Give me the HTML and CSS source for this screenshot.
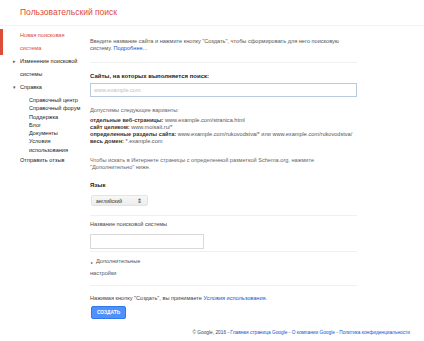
FILE: index.html
```html
<!DOCTYPE html>
<html lang="ru">
<head>
  <meta charset="UTF-8">
  <title>Пользовательский поиск</title>
  <link rel="stylesheet" href="styles.css">
</head>
<body>
  <header class="top">
    <h1>Пользовательский поиск</h1>
  </header>

  <div class="layout">
    <nav class="side">
      <div class="item active">Новая поисковая система</div>
      <div class="item"><span class="arrow">&#9656;</span>Изменение поисковой системы</div>
      <div class="item"><span class="arrow">&#9662;</span>Справка</div>
      <ul class="sub">
        <li>Справочный центр</li>
        <li>Справочный форум</li>
        <li>Поддержка</li>
        <li>Блог</li>
        <li>Документы</li>
        <li>Условия использования</li>
      </ul>
      <div class="item">Отправить отзыв</div>
    </nav>

    <main class="content">
      <p class="intro">Введите название сайта и нажмите кнопку "Создать", чтобы сформировать для него поисковую систему. <a href="#">Подробнее...</a></p>
      <hr>

      <label class="label">Сайты, на которых выполняется поиск:</label>
      <input class="field wide" type="text" placeholder="www.example.com">

      <p class="hint">Допустимы следующие варианты:</p>
      <ul class="variants">
        <li><b>отдельные веб-страницы:</b> www.example.com/stranica.html</li>
        <li><b>сайт целиком:</b> www.moisait.ru/*</li>
        <li><b>определенные разделы сайта:</b> www.example.com/rukovodstva/* или www.example.com/rukovodstva/</li>
        <li><b>весь домен:</b> *.example.com</li>
      </ul>
      <p class="hint schema">Чтобы искать в Интернете страницы с определенной разметкой Schema.org, нажмите "Дополнительно" ниже.</p>

      <label class="label lang">Язык</label>
      <div class="select">английский <span class="updown">&#8661;</span></div>
      <hr class="sep-lang">

      <label class="label name">Название поисковой системы</label>
      <input class="field short" type="text">
      <hr class="sep-name">

      <div class="advanced"><span class="arrow">&#9656;</span>Дополнительные настройки</div>
      <hr class="sep-adv">

      <p class="terms">Нажимая кнопку "Создать", вы принимаете <a href="#">Условия использования</a>.</p>
      <button class="create">СОЗДАТЬ</button>
    </main>
  </div>

  <footer class="foot">
    &copy; Google, 2016 - <a href="#">Главная страница Google</a> - <a href="#">О компании Google</a> - <a href="#">Политика конфиденциальности</a>
  </footer>
</body>
</html>
```

FILE: styles.css
```css
body {
  margin: 0;
  font-family: "Liberation Sans", Arial, sans-serif;
  font-size: 5.6px;
  color: #444;
  background: #fff;
}
a {
  color: #1155cc;
  text-decoration: none;
}

.top {
  height: 25px;
  border-bottom: 1px solid #f2f2f2;
}
.top h1 {
  margin: 0;
  padding-left: 20px;
  line-height: 25px;
  font-size: 8.5px;
  font-weight: normal;
  color: #dd4b39;
}

.layout {
  display: flex;
}

/* левая колонка */
.side {
  width: 90px;
  flex-shrink: 0;
  padding-top: 3px;
  color: #222;
}
.item {
  position: relative;
  padding: 0 8px 0 20px;
  line-height: 13px;
}
.item.active {
  color: #dd4b39;
  border-left: 3px solid #dd4b39;
  padding-left: 17px;
}
.item .arrow {
  position: absolute;
  left: 13px;
  font-size: 5px;
  color: #555;
}
.sub {
  list-style: none;
  margin: 2px 0 0;
  padding: 0 4px 0 29px;
  line-height: 8.3px;
}

/* основная часть */
.content {
  width: 267px;
  padding: 12px 0 0;
}
.content p {
  margin: 0;
}
.intro {
  line-height: 7px;
  color: #555;
}
hr {
  border: 0;
  border-top: 1px solid #f0f0f0;
  margin: 10px 0 0;
}
.label {
  display: block;
  margin-top: 10px;
  line-height: 7px;
  font-size: 6px;
  font-weight: bold;
  color: #222;
}
.field {
  display: block;
  box-sizing: border-box;
  margin: 3px 0 0;
  height: 14px;
  padding: 0 3px;
  border: 1px solid #b9c9e0;
  font: inherit;
}
.field::placeholder {
  color: #c0c0c0;
}
.field.wide {
  width: 267px;
}
.field.short {
  width: 114px;
  height: 15px;
  margin-top: 6px;
  border-color: #d9d9d9;
}
.hint {
  margin-top: 10px !important;
  line-height: 7px;
  color: #666;
}
.variants {
  list-style: none;
  margin: 3px 0 0;
  padding: 0;
  line-height: 7px;
  color: #555;
}
.variants b {
  color: #333;
}
.hint.schema {
  margin-top: 12px !important;
}
.label.lang {
  margin-top: 11px;
}
.select {
  display: flex;
  justify-content: space-between;
  align-items: center;
  box-sizing: border-box;
  width: 57px;
  height: 11px;
  margin: 6px 0 0 1px;
  padding: 0 5px 0 4px;
  background: linear-gradient(#f8f8f8, #ececec);
  border: 1px solid #e4e4e4;
  border-radius: 2px;
  color: #333;
  font-size: 5px;
}
.updown {
  font-size: 6px;
}
.sep-lang {
  margin-top: 9px;
}
.label.name {
  margin-top: 5px;
  font-size: 5.6px;
  font-weight: normal;
  color: #444;
}
.sep-name {
  margin-top: 2px;
}
.advanced {
  width: 60px;
  margin-top: 4px;
  line-height: 10px;
  color: #555;
}
.advanced .arrow {
  font-size: 3.5px;
  margin: 0 3px 0 1px;
  vertical-align: -1px;
}
.sep-adv {
  margin-top: 7px;
}
.terms {
  margin-top: 9px !important;
  line-height: 7px;
  color: #444;
}
.create {
  display: block;
  margin: 4px 0 0 1px;
  height: 13px;
  padding: 0 5px;
  border: 1px solid #3079ed;
  border-radius: 2px;
  background: #4d90fe;
  color: #fff;
  font: bold 4.8px "Liberation Sans", Arial, sans-serif;
}

.foot {
  margin-top: 11px;
  padding-right: 14px;
  text-align: right;
  font-size: 4.8px;
  color: #444;
}
```
